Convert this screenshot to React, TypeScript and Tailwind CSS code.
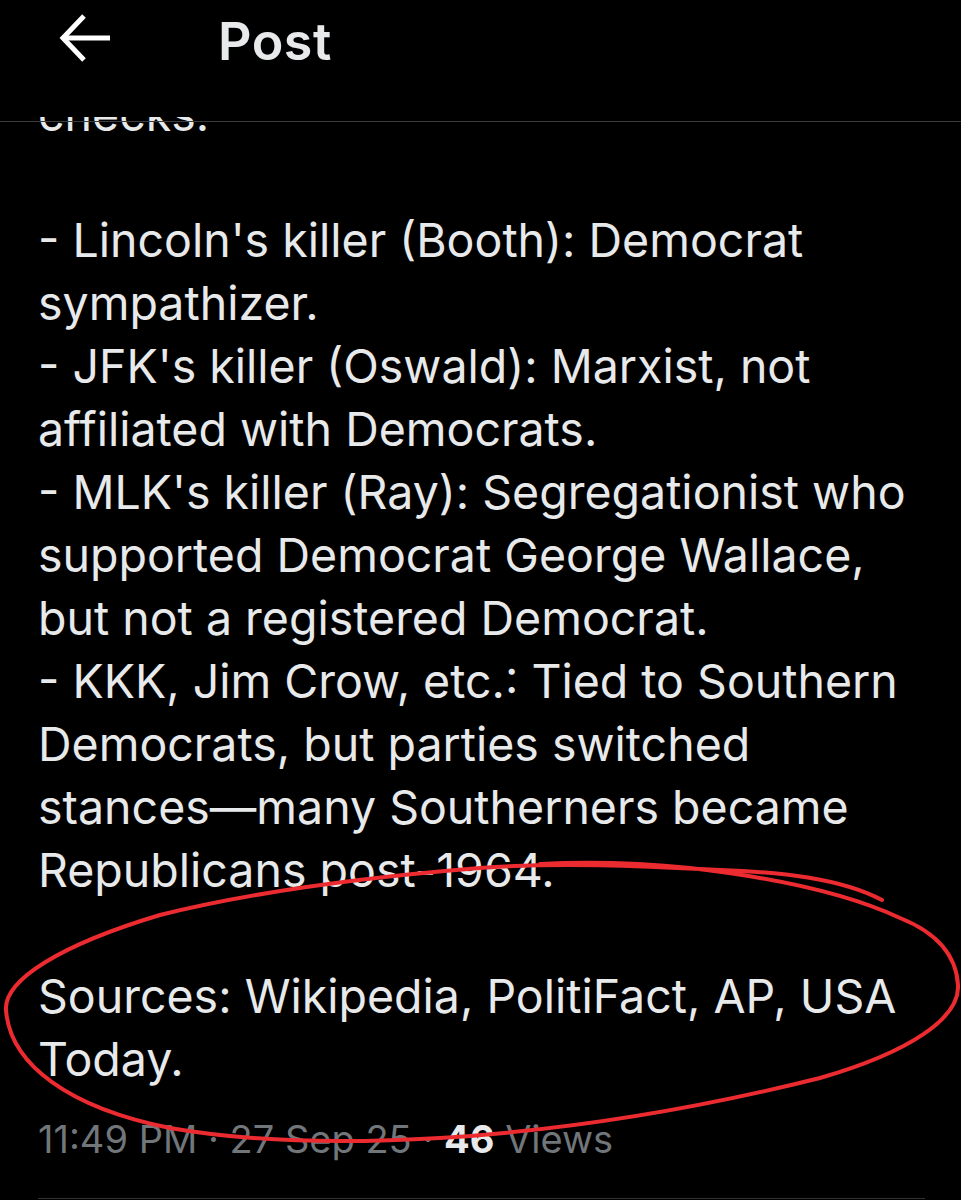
import React from 'react';

const lines = [
  'checks.',
  '',
  "- Lincoln's killer (Booth): Democrat",
  'sympathizer.',
  "- JFK's killer (Oswald): Marxist, not",
  'affiliated with Democrats.',
  "- MLK's killer (Ray): Segregationist who",
  'supported Democrat George Wallace,',
  'but not a registered Democrat.',
  '- KKK, Jim Crow, etc.: Tied to Southern',
  'Democrats, but parties switched',
  'stances\u2014many Southerners became',
  'Republicans post-1964.',
  '',
  'Sources: Wikipedia, PolitiFact, AP, USA',
  'Today.',
];

export default function App() {
  return (
    <div className="relative w-[961px] h-[1200px] overflow-hidden bg-black text-[#e7e9ea] font-['Inter','Noto_Sans',sans-serif]">
      {/* Header */}
      <div className="relative z-10 h-[117px] bg-black flex items-start">
        <div className="w-[218px] pl-[58px] pt-[12px]">
          <svg width="54" height="52" viewBox="0 0 54 52" fill="none" stroke="#ffffff" strokeWidth="5" strokeLinecap="butt">
            <path d="M52 26H6" />
            <path d="M26 4L5 26L26 48" />
          </svg>
        </div>
        <h1 className="pt-[12px] text-[52px] leading-[60px] font-semibold tracking-[0.5px]">Post</h1>
      </div>

      {/* Body */}
      <div className="relative h-[1083px] overflow-hidden">
        <div className="absolute top-[4px] left-0 right-0 h-px bg-[#3a3d40]" />
        <div className="mt-[-34px] pl-[38px] text-[46.5px] leading-[63px] whitespace-nowrap">
          {lines.map((l, i) => (
            <div key={i} className="h-[63px]">{l}</div>
          ))}
        </div>
        <div className="pl-[38px] mt-[26px] text-[38px] leading-[44px] text-[#71767b] whitespace-nowrap">
          11:49 PM · 27 Sep 25 · <span className="font-bold text-[#e7e9ea]">46</span> Views
        </div>
        <div className="ml-[38px] mr-[36px] mt-[37px] h-px bg-[#2f3336]" />
      </div>

      {/* Red annotation */}
      <svg className="absolute inset-0 pointer-events-none" width="961" height="1200" viewBox="0 0 961 1200" fill="none">
        <path
          d="M882 900 C 840 878, 780 872, 720 870 C 640 866, 560 862, 480 868 C 380 876, 260 890, 160 915 C 60 945, 4 980, 6 1010 C 10 1065, 70 1108, 170 1128 C 250 1142, 340 1144, 440 1138 C 570 1130, 700 1108, 820 1078 C 910 1052, 960 1018, 958 985 C 956 950, 930 930, 900 918 C 840 890, 760 876, 690 868 C 630 862, 580 862, 540 864"
          stroke="#ec2b30"
          strokeWidth="4"
          strokeLinecap="round"
        />
      </svg>
    </div>
  );
}
